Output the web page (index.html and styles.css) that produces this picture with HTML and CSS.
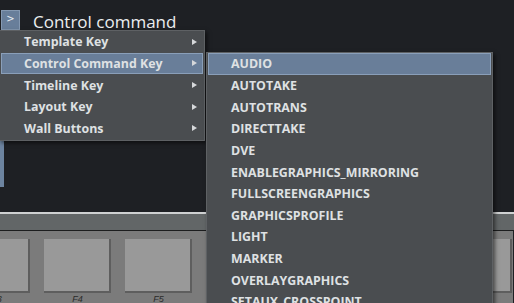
FILE: index.html
```html
<!DOCTYPE html>
<html>
<head>
<meta charset="utf-8">
<link rel="stylesheet" href="styles.css">
</head>
<body>
<div class="app">
  <div class="top">
    <div class="header">
      <button class="toggle">&gt;</button>
      <span class="title">Control command</span>
    </div>
    <div class="strip"></div>
  </div>
  <div class="divider"></div>
  <div class="panel">
    <div class="keys">
      <div class="key"><div class="pad"></div><span class="lbl">F3</span></div>
      <div class="key"><div class="pad"></div><span class="lbl">F4</span></div>
      <div class="key"><div class="pad"></div><span class="lbl">F5</span></div>
      <div class="key"><div class="pad"></div><span class="lbl">F6</span></div>
      <div class="key"><div class="pad"></div><span class="lbl">F7</span></div>
      <div class="key"><div class="pad"></div><span class="lbl">F8</span></div>
      <div class="key"><div class="pad"></div><span class="lbl">F9</span></div>
    </div>
  </div>
</div>

<ul class="menu main-menu">
  <li class="item"><span>Template Key</span><i class="arrow"></i></li>
  <li class="item active"><span>Control Command Key</span><i class="arrow"></i></li>
  <li class="item"><span>Timeline Key</span><i class="arrow"></i></li>
  <li class="item"><span>Layout Key</span><i class="arrow"></i></li>
  <li class="item"><span>Wall Buttons</span><i class="arrow"></i></li>
</ul>

<ul class="menu sub-menu">
  <li class="item active"><span>AUDIO</span></li>
  <li class="item"><span>AUTOTAKE</span></li>
  <li class="item"><span>AUTOTRANS</span></li>
  <li class="item"><span>DIRECTTAKE</span></li>
  <li class="item"><span>DVE</span></li>
  <li class="item"><span>ENABLEGRAPHICS_MIRRORING</span></li>
  <li class="item"><span>FULLSCREENGRAPHICS</span></li>
  <li class="item"><span>GRAPHICSPROFILE</span></li>
  <li class="item"><span>LIGHT</span></li>
  <li class="item"><span>MARKER</span></li>
  <li class="item"><span>OVERLAYGRAPHICS</span></li>
  <li class="item"><span>SETAUX_CROSSPOINT</span></li>
</ul>
</body>
</html>
```

FILE: styles.css
```css
html, body {
  margin: 0;
  padding: 0;
  width: 514px;
  height: 303px;
  overflow: hidden;
  background: #1e2024;
  font-family: "Open Sans", "Noto Sans", sans-serif;
}

.app {
  display: flex;
  flex-direction: column;
  height: 303px;
  overflow: hidden;
}

.top {
  flex: none;
  height: 212px;
  display: flex;
  flex-direction: column;
}

.header {
  display: flex;
  align-items: center;
  gap: 13px;
  padding: 10px 0 0 1px;
  height: 20px;
}

.toggle {
  width: 19px;
  height: 20px;
  padding: 0 0 3px 0;
  margin: 0;
  border: 1px solid #8599b2;
  background: #687e9a;
  color: #e6ecf2;
  font-family: "DejaVu Sans", sans-serif;
  font-size: 10px;
  line-height: 1;
}

.title {
  color: #eceef0;
  font-size: 17px;
  line-height: 20px;
  margin-top: 4px;
}

.strip {
  margin-top: 109px;
  width: 4px;
  height: 48px;
  background: #6d84a0;
}

.divider {
  flex: none;
  height: 16px;
  border-top: 2px solid #cfd1d2;
  border-bottom: 1px solid #1c1d1e;
  background: #626667;
}

.panel {
  flex: 1;
  min-height: 0;
  background: #7b7b7b;
  overflow: hidden;
  width: 513px;
}

.keys {
  display: flex;
  gap: 14px;
  padding-top: 8px;
  margin-left: -37px;
}

.key {
  width: 67px;
  flex: none;
  display: flex;
  flex-direction: column;
  align-items: center;
}

.pad {
  width: 65px;
  height: 52px;
  background: #999999;
  border-right: 2px solid #5e5e5e;
  border-bottom: 2px solid #5e5e5e;
}

.key:nth-child(7) .pad {
  width: 61px;
  margin-right: 4px;
}

.lbl {
  font-family: "Liberation Sans", sans-serif;
  font-style: italic;
  font-size: 9px;
  line-height: 9px;
  color: #2a2a2a;
  margin-top: 2px;
}

.menu {
  position: absolute;
  margin: 0;
  padding: 1px;
  list-style: none;
  background: #4a4d50;
  border: 1px solid #5e6164;
  box-shadow: 2px 2px 4px rgba(0,0,0,0.55);
}

.main-menu {
  left: -1px;
  top: 30px;
  width: 202px;
  padding: 0 1px 1px 1px;
}

.sub-menu {
  left: 206px;
  top: 52px;
  width: 283px;
  padding: 0 1px;
}

.item {
  height: 21.65px;
  display: flex;
  align-items: center;
  justify-content: space-between;
  padding: 0 5px 0 22px;
  box-sizing: border-box;
  color: #dfe1e3;
  font-weight: 700;
  font-size: 12.4px;
  border: 1px solid transparent;
}

.sub-menu .item {
  padding-left: 22px;
}

.item.active {
  background: #697e99;
  border-color: #8a9fb9;
}

.arrow {
  width: 0;
  height: 0;
  border-top: 3.5px solid transparent;
  border-bottom: 3.5px solid transparent;
  border-left: 5px solid #d6d8da;
}
```
